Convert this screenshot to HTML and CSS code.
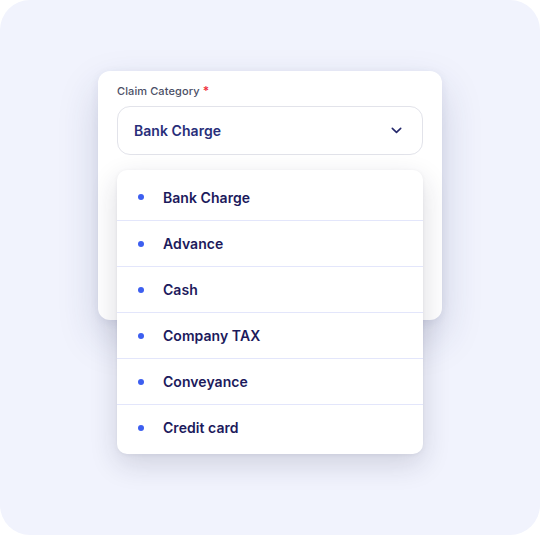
FILE: index.html
```html
<!DOCTYPE html>
<html>
<head>
<meta charset="utf-8">
<link rel="stylesheet" href="styles.css">
</head>
<body>
<div class="frame">
  <div class="card">
    <div class="label">Claim Category <span class="req">*</span></div>
    <div class="select">
      <span class="value">Bank Charge</span>
      <svg class="chev" width="11" height="7" viewBox="0 0 11 7"><path d="M1.3 1.4 L5.5 5.4 L9.7 1.4" fill="none" stroke="#24286b" stroke-width="1.6" stroke-linecap="round" stroke-linejoin="round"/></svg>
    </div>
    <ul class="menu">
      <li><span class="dot"></span>Bank Charge</li>
      <li><span class="dot"></span>Advance</li>
      <li><span class="dot"></span>Cash</li>
      <li><span class="dot"></span>Company TAX</li>
      <li><span class="dot"></span>Conveyance</li>
      <li><span class="dot"></span>Credit card</li>
    </ul>
  </div>
</div>
</body>
</html>
```
FILE: styles.css
```css
html, body { margin: 0; padding: 0; background: #ffffff; }
body { font-family: "Inter", "Open Sans", sans-serif; }
.frame {
  width: 540px;
  height: 535px;
  box-sizing: border-box;
  background: #f1f3fd;
  border-radius: 30px;
  padding: 71px 0 0 98px;
}
.card {
  position: relative;
  width: 344px;
  height: 249px;
  box-sizing: border-box;
  background: #ffffff;
  border-radius: 12px;
  padding: 13px 19px 0 19px;
  box-shadow: 0 18px 40px rgba(40, 48, 100, 0.18), 0 2px 10px rgba(40, 48, 100, 0.07);
}
.label {
  font-size: 11px;
  font-weight: 500;
  color: #4b4f66;
  height: 22px;
  line-height: 14px;
  letter-spacing: 0.1px;
}
.req { color: #f0303f; font-size: 12px; font-weight: 600; line-height: 10px; }
.select {
  height: 49px;
  box-sizing: border-box;
  border: 1px solid #e2e3ea;
  border-radius: 13px;
  display: flex;
  align-items: center;
  justify-content: space-between;
  padding: 0 20px 0 16px;
}
.value {
  font-size: 14px;
  font-weight: 600;
  color: #282e7a;
  letter-spacing: 0.05px;
  margin-top: -1px;
}
.chev { display: block; }
.menu {
  position: absolute;
  left: 19px;
  top: 99px;
  width: 306px;
  margin: 0;
  padding: 4px 0;
  list-style: none;
  background: #ffffff;
  border-radius: 10px;
  box-shadow: 0 10px 28px rgba(30, 30, 60, 0.16), 0 1px 4px rgba(30, 30, 60, 0.06);
}
.menu li {
  height: 46px;
  box-sizing: border-box;
  display: flex;
  align-items: center;
  padding-left: 21px;
  font-size: 14px;
  font-weight: 600;
  color: #1c1a5c;
  letter-spacing: 0.05px;
  border-top: 1px solid #e3e6fb;
}
.menu li:first-child { border-top: none; }
.dot {
  width: 6px;
  height: 6px;
  border-radius: 50%;
  background: #3d5ff0;
  margin-right: 19px;
}
```
